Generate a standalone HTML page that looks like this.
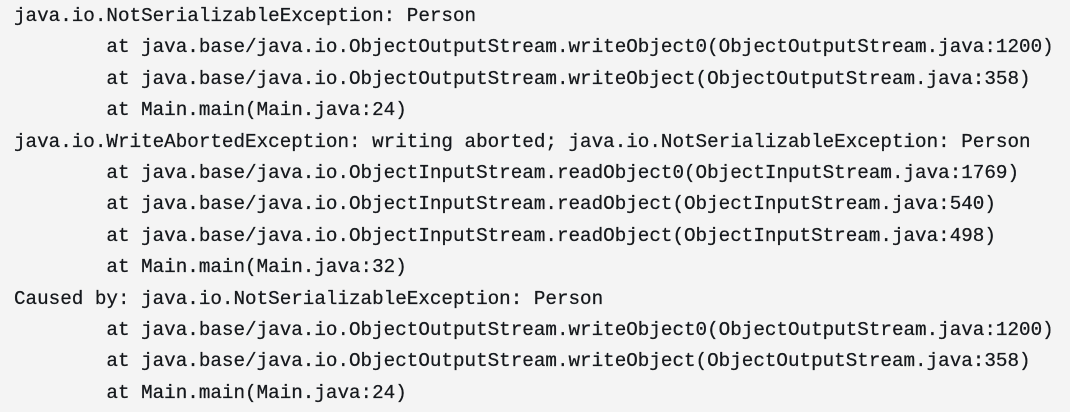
<!DOCTYPE html>
<html><head><style>
html,body{margin:0;padding:0;background:#f4f4f4;width:1070px;height:412px;overflow:hidden}
pre{margin:0;padding:0 0 0 14px;font-family:"Liberation Mono",monospace;font-size:19.25px;line-height:31.4px;color:#15181c;-webkit-text-stroke:0.25px #15181c;position:relative;top:1px}
</style></head><body><pre>java.io.NotSerializableException: Person
        at java.base/java.io.ObjectOutputStream.writeObject0(ObjectOutputStream.java:1200)
        at java.base/java.io.ObjectOutputStream.writeObject(ObjectOutputStream.java:358)
        at Main.main(Main.java:24)
java.io.WriteAbortedException: writing aborted; java.io.NotSerializableException: Person
        at java.base/java.io.ObjectInputStream.readObject0(ObjectInputStream.java:1769)
        at java.base/java.io.ObjectInputStream.readObject(ObjectInputStream.java:540)
        at java.base/java.io.ObjectInputStream.readObject(ObjectInputStream.java:498)
        at Main.main(Main.java:32)
Caused by: java.io.NotSerializableException: Person
        at java.base/java.io.ObjectOutputStream.writeObject0(ObjectOutputStream.java:1200)
        at java.base/java.io.ObjectOutputStream.writeObject(ObjectOutputStream.java:358)
        at Main.main(Main.java:24)</pre></body></html>
